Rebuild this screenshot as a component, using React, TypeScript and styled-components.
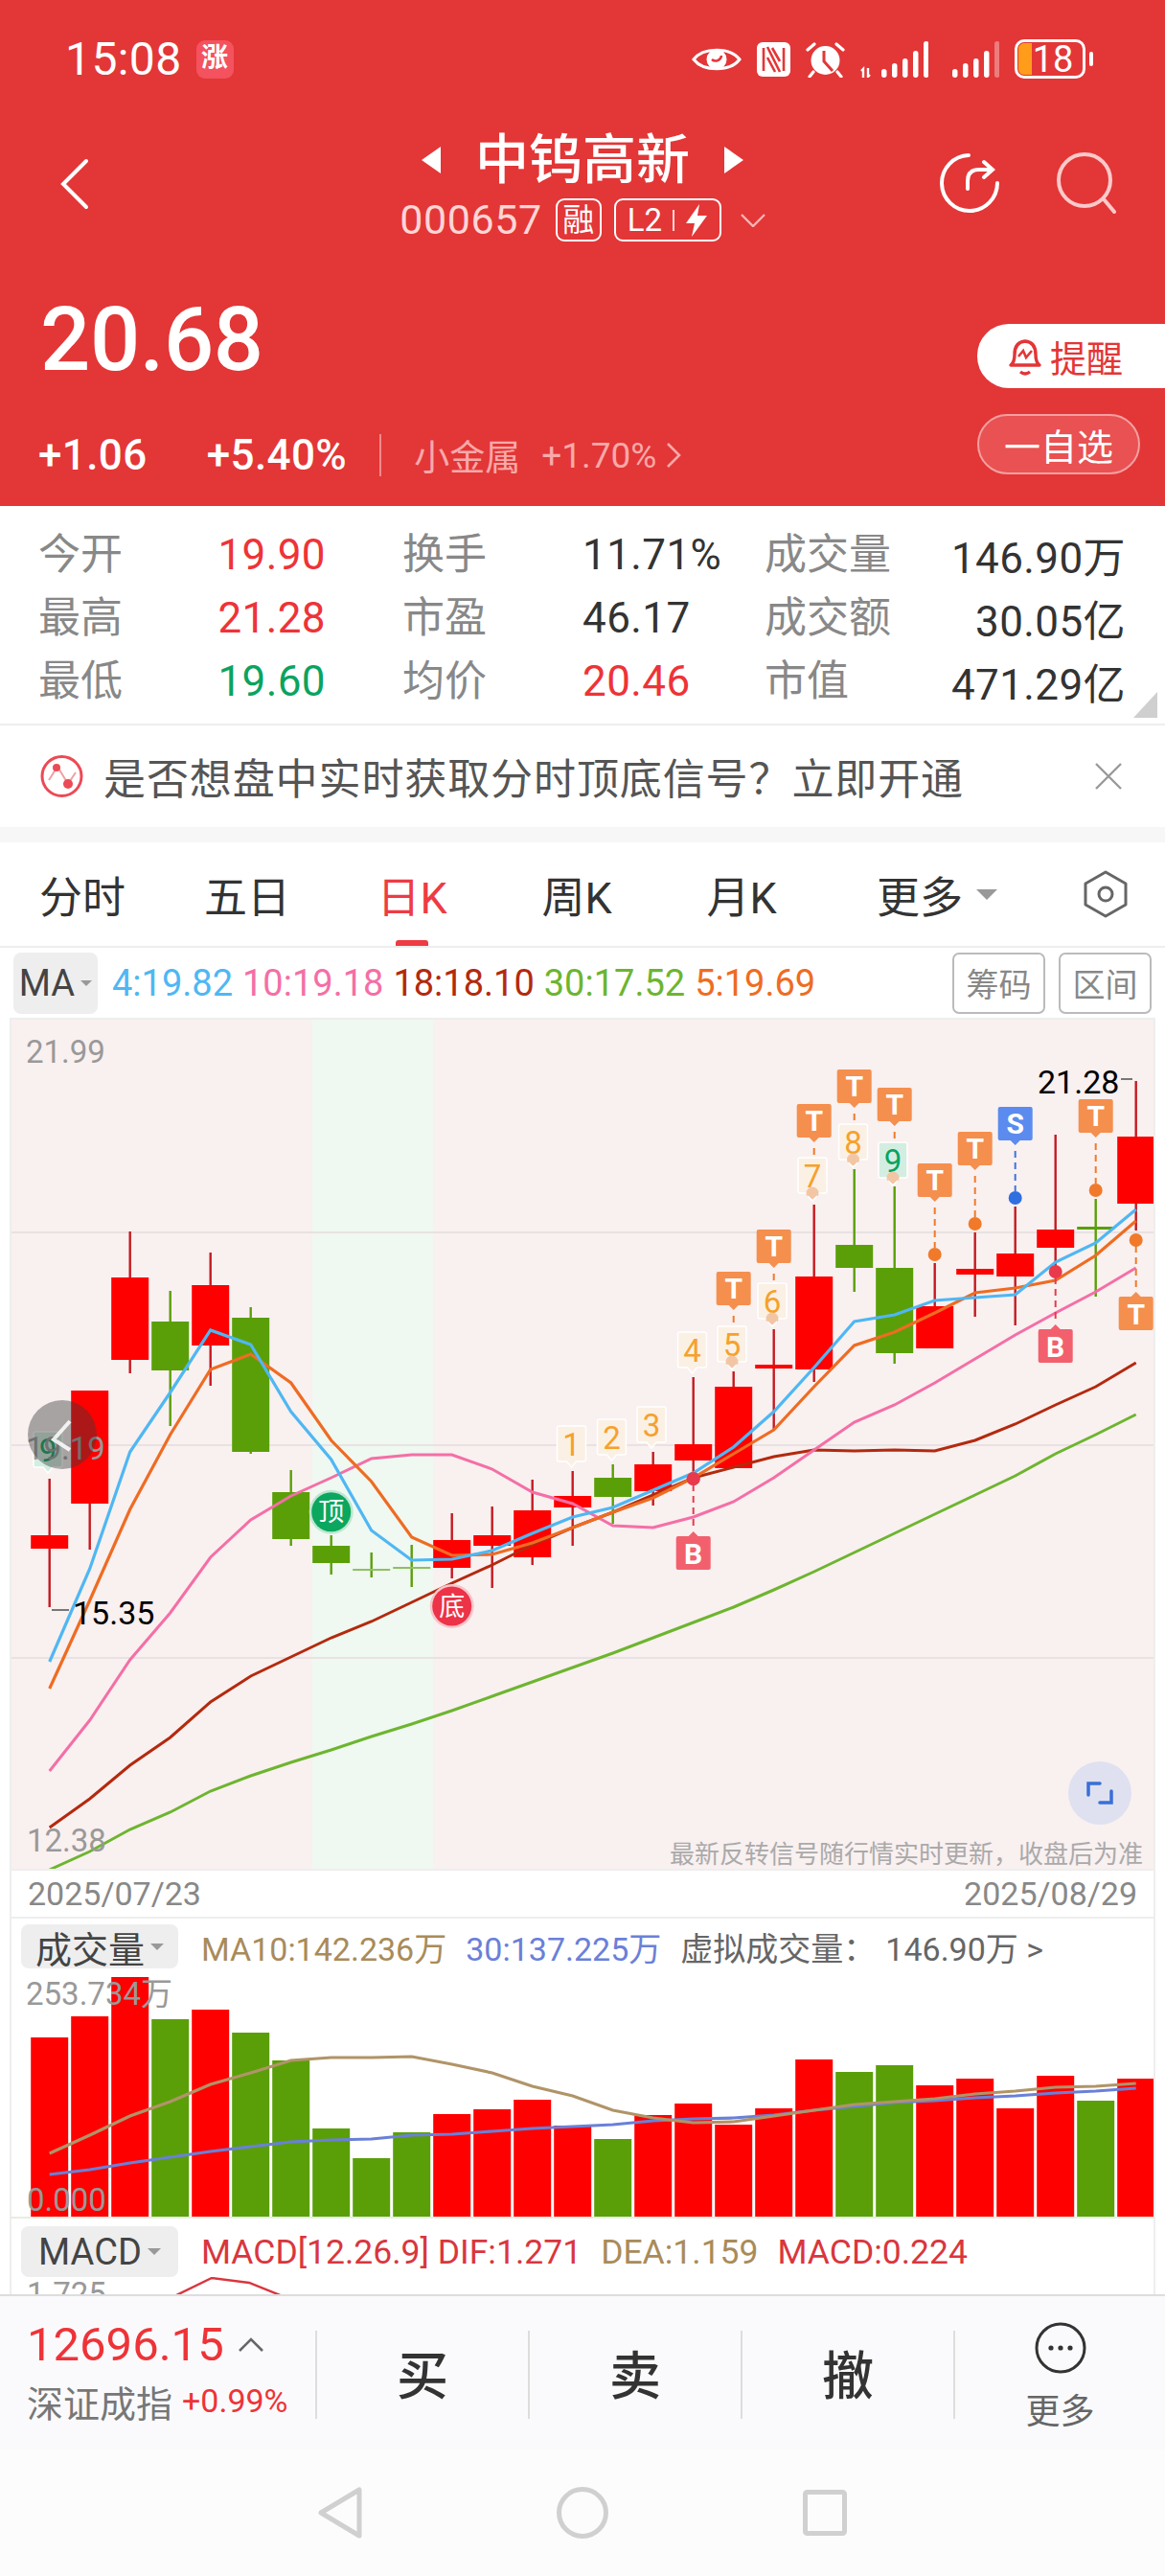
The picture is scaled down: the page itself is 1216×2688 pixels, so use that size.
import * as React from "react";
import styled, { createGlobalStyle } from "styled-components";

const GlobalStyle = createGlobalStyle`
  html, body {
    margin: 0;
    padding: 0;
    background: #fff;
    font-family: Roboto, "Noto Sans CJK SC", sans-serif;
  }
  * {
    box-sizing: border-box;
  }
`;

const RED = "#e33637";
const UP = "#ee3338";
const DOWN = "#0ba360";

const Page = styled.div`
  width: 1216px;
  height: 2688px;
  overflow: hidden;
  display: flex;
  flex-direction: column;
  background: #fff;
`;

/* ---------- red header ---------- */

const Header = styled.header`
  height: 528px;
  flex: none;
  background: ${RED};
  color: #fff;
  padding-top: 41px;
`;

const StatusBar = styled.div`
  height: 41px;
  padding: 0 83px 0 68px;
  display: flex;
  align-items: center;
  justify-content: space-between;
`;

const StatusLeft = styled.div`
  display: flex;
  align-items: center;
  gap: 15px;
`;

const Clock = styled.span`
  font-size: 48px;
  line-height: 41px;
  letter-spacing: 0.4px;
`;

const AppBadge = styled.span`
  width: 39px;
  height: 40px;
  border-radius: 9px;
  background: #f4525e;
  color: #fff;
  font-size: 28px;
  font-weight: 700;
  line-height: 38px;
  text-align: center;
`;

const StatusIcons = styled.div`
  display: flex;
  align-items: center;
  gap: 16px;
`;

const Battery = styled.div`
  position: relative;
  width: 74px;
  height: 41px;
  border: 3px solid #fff;
  border-radius: 10px;
  overflow: visible;
  display: flex;
  align-items: center;
  justify-content: center;
  padding-left: 6px;
  font-size: 38px;
  line-height: 1;

  &::before {
    content: "";
    position: absolute;
    left: 1px;
    top: 1px;
    bottom: 1px;
    width: 14px;
    border-radius: 6px 0 0 6px;
    background: #ff9c1a;
  }

  &::after {
    content: "";
    position: absolute;
    right: -11px;
    top: 10px;
    width: 4px;
    height: 15px;
    border-radius: 2px;
    background: #fff;
  }
`;

const BatteryValue = styled.span`
  position: relative;
`;

const NavRow = styled.div`
  margin-top: 55px;
  height: 115px;
  padding: 0 51px;
  display: grid;
  grid-template-columns: 1fr auto 1fr;
  align-items: center;
`;

const RightIcons = styled.div`
  justify-self: end;
  display: flex;
  gap: 60px;
  align-items: center;
  margin-bottom: 8px;
`;

const BackIcon = styled.svg`
  margin: 0 0 6px 12px;
`;

const TitleBlock = styled.div`
  display: flex;
  flex-direction: column;
  align-items: center;
  gap: 10px;
`;

const TitleRow = styled.div`
  height: 60px;
  display: flex;
  align-items: center;
  gap: 35px;
`;

const StockName = styled.h1`
  margin: 0;
  font-size: 56px;
  line-height: 60px;
  font-weight: 500;
`;

const CodeRow = styled.div`
  height: 45px;
  display: flex;
  align-items: center;
`;

const StockCode = styled.span`
  font-size: 43px;
  line-height: 45px;
  letter-spacing: 0.6px;
  color: #ffd5d5;
  margin-right: 14px;
`;

const OutlineBadge = styled.span`
  height: 45px;
  border: 2px solid #fff;
  border-radius: 9px;
  display: inline-flex;
  align-items: center;
  justify-content: center;
  color: #fff;
  line-height: 1;
`;

const RongBadge = styled(OutlineBadge)`
  width: 48px;
  font-size: 33px;
  margin-right: 13px;
`;

const LevelBadge = styled(OutlineBadge)`
  width: 112px;
  font-size: 33px;
  gap: 11px;
  margin-right: 20px;
`;

const LevelDivider = styled.i`
  width: 2px;
  height: 22px;
  background: #ffd5d5;
`;

const QuoteRow = styled.div`
  display: flex;
  justify-content: space-between;
  padding-top: 60px;
`;

const QuoteLeft = styled.div`
  padding-left: 40px;
`;

const Price = styled.div`
  font-size: 92px;
  line-height: 86px;
  font-weight: 500;
  letter-spacing: -0.4px;
  margin-left: 2px;
`;

const ChangeRow = styled.div`
  margin-top: 55px;
  height: 44px;
  display: flex;
  align-items: center;
`;

const ChangeValue = styled.span`
  font-size: 44px;
  font-weight: 500;
  letter-spacing: 0.4px;
  margin-right: 62px;
  line-height: 44px;
  &:nth-child(2) {
    margin-right: 34px;
  }
`;

const ChangeDivider = styled.i`
  width: 2px;
  height: 44px;
  background: #f08a8a;
  margin-right: 34px;
`;

const SectorName = styled.span`
  font-size: 37px;
  color: #f7a9a9;
  margin-right: 22px;
`;

const SectorChange = styled.span`
  font-size: 37px;
  color: #f7a9a9;
  margin-right: 10px;
`;

const QuoteActions = styled.div`
  padding-top: 26px;
  width: 196px;
  display: flex;
  flex-direction: column;
  gap: 27px;
`;

const RemindButton = styled.div`
  height: 67px;
  background: #fff;
  border-radius: 33px 0 0 33px;
  color: ${RED};
  font-size: 38px;
  display: flex;
  align-items: center;
  gap: 8px;
  padding-left: 32px;
`;

const WatchButton = styled.div`
  width: 170px;
  height: 63px;
  border: 2px solid #f3a0a0;
  border-radius: 32px;
  background: #e95152;
  font-size: 38px;
  display: flex;
  align-items: center;
  justify-content: center;
`;

/* ---------- stats ---------- */

const StatsGrid = styled.section`
  position: relative;
  height: 229px;
  flex: none;
  padding: 15px 41px 0 40px;
  display: grid;
  grid-template-columns: 150px 150px 268px 190px 180px 197px;
  grid-auto-rows: 66px;
  align-items: center;
  border-bottom: 2px solid #eeeeee;

  &::after {
    content: "";
    position: absolute;
    right: 8px;
    bottom: 6px;
    border-style: solid;
    border-width: 0 0 27px 25px;
    border-color: transparent transparent #cfcfcf transparent;
  }
`;

const StatLabel = styled.span<{ $inset?: boolean }>`
  font-size: 44px;
  color: #888;
  white-space: nowrap;
  padding-left: ${(p) => (p.$inset ? "80px" : "0")};
  padding-bottom: 3px;
`;

const StatValue = styled.span<{ $color?: string; $right?: boolean }>`
  font-size: 44px;
  letter-spacing: 0.4px;
  color: ${(p) => p.$color || "#333"};
  text-align: ${(p) => (p.$right ? "right" : "left")};
  padding-top: 5px;
  white-space: nowrap;
`;

const Banner = styled.div`
  height: 106px;
  flex: none;
  display: flex;
  align-items: center;
  padding: 0 44px 0 42px;
  gap: 21px;
`;

const BannerText = styled.span`
  flex: 1;
  font-size: 44px;
  color: #555;
  white-space: nowrap;
  letter-spacing: 0.9px;
`;

const GapBand = styled.div`
  height: 16px;
  flex: none;
  background: #f7f7f7;
`;

/* ---------- tabs ---------- */

const Tabs = styled.nav`
  height: 110px;
  flex: none;
  display: grid;
  grid-template-columns: repeat(6, 172px) 1fr;
  align-items: center;
  border-bottom: 2px solid #eeeeee;
`;

const Tab = styled.div<{ $active?: boolean }>`
  position: relative;
  height: 108px;
  display: flex;
  align-items: center;
  justify-content: center;
  gap: 14px;
  font-size: 45px;
  white-space: nowrap;
  color: ${(p) => (p.$active ? "#ee3b44" : "#333")};

  &::after {
    content: "";
    display: ${(p) => (p.$active ? "block" : "none")};
    position: absolute;
    bottom: 0;
    left: 50%;
    width: 34px;
    height: 6px;
    margin-left: -17px;
    border-radius: 3px 3px 0 0;
    background: #ee3b44;
  }
`;

const MoreTab = styled(Tab)`
  justify-content: flex-start;
  padding-left: 55px;
`;

const Caret = styled.i<{ $size?: number }>`
  width: 0;
  height: 0;
  border-style: solid;
  border-width: ${(p) => p.$size || 11}px ${(p) => p.$size || 11}px 0;
  border-color: #999 transparent transparent;
`;

const TabTool = styled.div`
  display: flex;
  justify-content: flex-end;
  padding-right: 38px;
`;

/* ---------- MA row ---------- */

const MaRow = styled.div`
  height: 73px;
  flex: none;
  display: flex;
  align-items: center;
  padding: 0 14px;
`;

const PickButton = styled.div<{ $w?: number; $h?: number }>`
  width: ${(p) => p.$w || 88}px;
  height: ${(p) => p.$h || 64}px;
  border-radius: 8px;
  background: #eeeeee;
  color: #444;
  font-size: 38px;
  display: flex;
  align-items: center;
  justify-content: center;
  gap: 6px;
  flex: none;
`;

const MaValues = styled.div`
  display: flex;
  gap: 10px;
  margin-left: 15px;
`;

const MaValue = styled.span<{ $color: string }>`
  font-size: 38px;
  color: ${(p) => p.$color};
  white-space: nowrap;
`;

const MaTools = styled.div`
  margin-left: auto;
  display: flex;
  gap: 14px;
`;

const MaTool = styled.div`
  width: 97px;
  height: 64px;
  border: 2px solid #bbb;
  border-radius: 7px;
  color: #888;
  font-size: 34px;
  display: flex;
  align-items: center;
  justify-content: center;
`;

/* ---------- charts ---------- */

const ChartFrame = styled.div`
  flex: none;
  margin: 0 10px;
  border-left: 2px solid #eeeeee;
  border-right: 2px solid #eeeeee;
`;

const KlineBox = styled(ChartFrame)`
  height: 890px;
  border-top: 2px solid #eeeeee;
  border-bottom: 2px solid #eeeeee;
  line-height: 0;
`;

const ChartSvg = styled.svg`
  display: block;
  font-family: Roboto, "Noto Sans CJK SC", sans-serif;
`;

const AxisText = styled.text`
  font-size: 33px;
  fill: #999;
`;

const ExtremeText = styled.text`
  font-size: 34px;
  fill: #000;
`;

const HintText = styled.text`
  font-size: 26px;
  fill: #aaa;
`;

const NumText = styled.text<{ $color: string }>`
  font-size: 33px;
  fill: ${(p) => p.$color};
  text-anchor: middle;
`;

const FlagText = styled.text`
  font-size: 30px;
  font-weight: 700;
  fill: #fff;
  text-anchor: middle;
`;

const CircleText = styled.text`
  font-size: 27px;
  fill: #fff;
  text-anchor: middle;
`;

const DateRow = styled(ChartFrame)`
  height: 50px;
  border-bottom: 2px solid #eeeeee;
  padding: 0 17px;
  display: flex;
  align-items: center;
  justify-content: space-between;
  font-size: 34px;
  color: #888;
`;

const IndicatorHead = styled(ChartFrame)<{ $size?: number }>`
  height: 52px;
  flex: none;
  padding: 6px 0 0 10px;
  display: flex;
  align-items: center;
  font-size: ${(p) => p.$size || 34}px;
  white-space: nowrap;
`;

const MacdHead = styled(IndicatorHead)`
  height: 61px;
  padding-top: 8px;
`;

const HeadText = styled.span<{ $color: string; $gap?: number }>`
  color: ${(p) => p.$color};
  margin-left: ${(p) => p.$gap ?? 20}px;
`;

const HeadAmount = styled.span`
  margin-left: 10px;
`;

const VolumeBox = styled(ChartFrame)`
  height: 261px;
  border-bottom: 2px solid #e6eee0;
`;

const MacdBox = styled(ChartFrame)`
  height: 18px;
  overflow: hidden;
`;

/* ---------- footer ---------- */

const TradeBar = styled.footer`
  height: 164px;
  flex: none;
  background: #fafafc;
  border-top: 2px solid #dddddd;
  display: grid;
  grid-template-columns: 331px 222px 222px 222px 1fr;
`;

const TradeCell = styled.div`
  margin-top: 36px;
  height: 92px;
  border-right: 2px solid #dddddd;
  display: flex;
  align-items: center;
  justify-content: center;
  font-size: 54px;
  font-weight: 500;
  color: #333;
  padding-bottom: 6px;

  &:last-child {
    border-right: 0;
  }
`;

const IndexCell = styled(TradeCell)`
  flex-direction: column;
  align-items: flex-start;
  justify-content: flex-start;
  padding: 0 0 0 28px;
`;

const IndexTop = styled.div`
  display: flex;
  align-items: center;
  gap: 14px;
  height: 46px;
  margin-top: -8px;
`;

const IndexValue = styled.span`
  font-size: 49px;
  line-height: 46px;
  font-weight: 400;
  color: ${UP};
`;

const IndexBottom = styled.div`
  display: flex;
  align-items: center;
  gap: 10px;
  margin-top: 13px;
  height: 44px;
`;

const IndexName = styled.span`
  font-size: 38px;
  font-weight: 400;
  color: #777;
`;

const IndexChange = styled.span`
  font-size: 34px;
  font-weight: 400;
  color: ${UP};
`;

const MoreCell = styled.div`
  display: flex;
  flex-direction: column;
  align-items: center;
  padding-top: 27px;
  gap: 20px;
  font-size: 36px;
  color: #666;
  line-height: 40px;
`;

const NavBar = styled.div`
  flex: 1;
  background: #fcfcfc;
  display: flex;
  align-items: center;
  justify-content: center;
  gap: 203px;
  margin-top: -2px;
`;

const SecondSignal = styled.span`
  margin-left: 9px;
  display: flex;
`;

/* ---------- data ---------- */

type Candle = [number, number, number, number, "r" | "g"];

// wick top, body top, body bottom, wick bottom (page px)
const candles: Candle[] = [
  [1543, 1602, 1616, 1677, "r"],
  [1451, 1451, 1569, 1617, "r"],
  [1285, 1333, 1419, 1433, "r"],
  [1347, 1379, 1430, 1488, "g"],
  [1307, 1341, 1404, 1446, "r"],
  [1364, 1375, 1515, 1517, "g"],
  [1534, 1557, 1606, 1613, "g"],
  [1602, 1613, 1631, 1643, "g"],
  [1620, 1637, 1639, 1646, "g"],
  [1612, 1635, 1637, 1656, "g"],
  [1579, 1607, 1636, 1647, "r"],
  [1572, 1602, 1613, 1657, "r"],
  [1544, 1576, 1625, 1633, "r"],
  [1535, 1561, 1573, 1613, "r"],
  [1528, 1542, 1562, 1590, "g"],
  [1515, 1528, 1556, 1571, "r"],
  [1437, 1507, 1524, 1543, "r"],
  [1431, 1447, 1532, 1532, "r"],
  [1387, 1424, 1428, 1492, "r"],
  [1257, 1332, 1429, 1442, "r"],
  [1220, 1299, 1323, 1348, "g"],
  [1238, 1323, 1412, 1423, "g"],
  [1318, 1363, 1407, 1407, "r"],
  [1286, 1324, 1330, 1374, "r"],
  [1259, 1308, 1332, 1383, "r"],
  [1184, 1283, 1302, 1327, "r"],
  [1251, 1280, 1283, 1353, "g"],
  [1128, 1186, 1256, 1284, "r"],
];

const ma4 = [1734, 1637, 1515, 1453, 1388, 1403, 1473, 1523, 1597, 1628, 1627, 1618, 1600, 1583, 1573, 1555, 1537, 1510, 1473, 1427, 1379, 1372, 1357, 1354, 1351, 1317, 1297, 1262];
const ma5 = [1762, 1670, 1575, 1497, 1429, 1413, 1443, 1503, 1546, 1604, 1623, 1622, 1610, 1594, 1578, 1563, 1542, 1517, 1492, 1447, 1404, 1390, 1370, 1349, 1344, 1336, 1310, 1274];
const ma10 = [1848, 1795, 1732, 1683, 1625, 1586, 1561, 1542, 1522, 1518, 1518, 1533, 1557, 1569, 1592, 1594, 1583, 1567, 1542, 1513, 1484, 1466, 1443, 1418, 1393, 1370, 1348, 1323];
const ma18 = [1907, 1877, 1842, 1813, 1776, 1749, 1729, 1709, 1692, 1672, 1652, 1633, 1612, 1594, 1578, 1560, 1542, 1531, 1520, 1513, 1514, 1513, 1514, 1503, 1486, 1466, 1447, 1422];
const ma30 = [1951, 1932, 1909, 1891, 1869, 1853, 1839, 1826, 1812, 1799, 1785, 1770, 1755, 1740, 1725, 1709, 1693, 1677, 1659, 1640, 1620, 1600, 1580, 1560, 1540, 1517, 1497, 1476];

const volumes: [number, "r" | "g"][] = [
  [2126, "r"], [2104, "r"], [2063, "r"], [2107, "g"], [2097, "r"], [2121, "g"], [2150, "g"],
  [2221, "g"], [2252, "g"], [2225, "g"], [2206, "r"], [2201, "r"], [2191, "r"], [2218, "r"],
  [2232, "g"], [2207, "r"], [2195, "r"], [2217, "r"], [2200, "r"], [2149, "r"], [2162, "g"],
  [2155, "g"], [2176, "r"], [2169, "r"], [2200, "r"], [2166, "r"], [2192, "g"], [2169, "r"],
];

const volMa10 = [2247, 2228, 2208, 2193, 2175, 2163, 2150, 2147, 2147, 2146, 2154, 2163, 2177, 2187, 2202, 2210, 2215, 2214, 2208, 2202, 2196, 2193, 2190, 2185, 2182, 2178, 2177, 2174];
const volMa30 = [2269, 2264, 2257, 2251, 2245, 2240, 2235, 2233, 2232, 2228, 2227, 2224, 2221, 2219, 2217, 2213, 2211, 2210, 2207, 2202, 2198, 2194, 2192, 2189, 2187, 2184, 2182, 2179];

const cx = (i: number) => 51.7 + 42 * i;
const points = (ys: number[]) => ys.map((y, i) => `${cx(i)},${y}`).join(" ");

const numTags: [string, number, number, boolean, boolean][] = [
  ["1", 596.5, 1488, false, false],
  ["2", 638.5, 1481, false, false],
  ["3", 680, 1468, false, false],
  ["4", 722.5, 1390, false, false],
  ["5", 764, 1384, true, false],
  ["6", 806, 1339, true, false],
  ["7", 848, 1208, true, false],
  ["8", 890.5, 1173, true, false],
  ["9", 932, 1192, true, true],
];

// candle index, label, top of flag, dot y (or 0), dash end, colour
const topFlags: [number, string, number, number, number, string][] = [
  [17, "T", 1327, 0, 1383, "#f58f4e"],
  [18, "T", 1283, 0, 1339, "#f58f4e"],
  [19, "T", 1152, 0, 1208, "#f58f4e"],
  [20, "T", 1116, 0, 1173, "#f58f4e"],
  [21, "T", 1135, 0, 1192, "#f58f4e"],
  [22, "T", 1214, 1309, 1302, "#f58f4e"],
  [23, "T", 1181, 1277, 1270, "#f58f4e"],
  [24, "S", 1155, 1250, 1243, "#5b8bee"],
  [26, "T", 1147, 1242, 1235, "#f58f4e"],
];

const bottomFlags: [number, string, number, number, string, string][] = [
  [16, "B", 1603, 1543, "#f2606e", "#e83a4c"],
  [25, "B", 1387, 1327, "#f2606e", "#e83a4c"],
  [27, "T", 1353, 1294, "#f58f4e", "#f07a2a"],
];

/* ---------- drawings ---------- */

function TopFlag({ x, y, label, fill }: { x: number; y: number; label: string; fill: string }) {
  return (
    <g>
      <path
        d={`M${x - 18} ${y + 2} q0 -2 2 -2 h32 q2 0 2 2 v31 q0 2 -2 2 h-11 l-5 5 l-5 -5 h-11 q-2 0 -2 -2 z`}
        fill={fill}
      />
      <FlagText x={x} y={y + 28}>{label}</FlagText>
    </g>
  );
}

function BottomFlag({ x, y, label, fill }: { x: number; y: number; label: string; fill: string }) {
  return (
    <g>
      <path
        d={`M${x - 18} ${y + 2} q0 -2 2 -2 h11 l5 -5 l5 5 h11 q2 0 2 2 v31 q0 2 -2 2 h-32 q-2 0 -2 -2 z`}
        fill={fill}
      />
      <FlagText x={x} y={y + 29}>{label}</FlagText>
    </g>
  );
}

function NumTag({ text, x, y, dot, green }: { text: string; x: number; y: number; dot: boolean; green: boolean }) {
  return (
    <g>
      <path
        d={`M${x - 15} ${y + 2} q0 -2 2 -2 h26 q2 0 2 2 v33 q0 2 -2 2 h-8 l-5 6 l-5 -6 h-8 q-2 0 -2 -2 z`}
        fill={green ? "#d3eee1" : "#fbf0e4"}
        stroke="#fff"
        strokeWidth={1.5}
      />
      <NumText x={x} y={y + 31} $color={green ? DOWN : "#f5a12c"}>{text}</NumText>
      {dot && (
        <g>
          <circle cx={x} cy={y + 37} r={6.5} fill="#f2c6a5" />
          <path d={`M${x - 5} ${y + 40} l5 5 l5 -5`} fill="none" stroke="#fff" strokeWidth={1.6} />
        </g>
      )}
    </g>
  );
}

function KlineChart() {
  return (
    <ChartSvg width={1192} height={886} viewBox="12 1064 1192 886">
      <rect x={12} y={1064} width={1192} height={886} fill="#f9f0f0" />
      <rect x={326} y={1064} width={126} height={886} fill="#eff8f1" />
      {[1286, 1508, 1730].map((y) => (
        <line key={y} x1={12} x2={1204} y1={y} y2={y} stroke="#e9e2e2" strokeWidth={2} />
      ))}

      {candles.map(([hi, top, bottom, lo, c], i) => {
        const doji = bottom - top < 4 && c === "g";
        const wick = c === "r" ? "#c51a20" : "#5a9f08";
        return (
          <g key={i}>
            <line x1={cx(i)} x2={cx(i)} y1={hi} y2={lo} stroke={wick} strokeWidth={2.4} />
            <rect
              x={cx(i) - 19.5}
              y={top}
              width={39}
              height={bottom - top}
              fill={c === "r" ? "#ff0000" : doji && i < 10 ? "#8fc062" : "#5a9f08"}
            />
          </g>
        );
      })}

      <circle cx={cx(16)} cy={1543} r={7} fill="#e83a4c" />
      <polyline points={points(ma30)} fill="none" stroke="#6db52f" strokeWidth={3} />
      <polyline points={points(ma18)} fill="none" stroke="#b32a0e" strokeWidth={3} />
      <polyline points={points(ma10)} fill="none" stroke="#f46fa6" strokeWidth={3} />
      <polyline points={points(ma5)} fill="none" stroke="#ee6c23" strokeWidth={3.2} />
      <polyline points={points(ma4)} fill="none" stroke="#4fb7f3" strokeWidth={3.2} />

      {/* dashes between flag and candle */}
      {topFlags.map(([i, , top, dot, end, color]) => (
        <g key={i}>
          <line
            x1={cx(i)}
            x2={cx(i)}
            y1={top + 46}
            y2={end}
            stroke={color === "#5b8bee" ? "#3b74e0" : "#f07a2a"}
            strokeWidth={2}
            strokeDasharray="7 5"
          />
          {dot > 0 && <circle cx={cx(i)} cy={dot} r={7} fill={color === "#5b8bee" ? "#2f6fe0" : "#f07a2a"} />}
        </g>
      ))}
      {bottomFlags.map(([i, , top, dot, , line]) => (
        <g key={i}>
          <line x1={cx(i)} x2={cx(i)} y1={dot + 6} y2={top - 6} stroke={line} strokeWidth={2} strokeDasharray="7 5" />
          <circle cx={cx(i)} cy={dot} r={7} fill={line} />
        </g>
      ))}

      {numTags.map(([t, x, y, dot, green]) => (
        <NumTag key={t} text={t} x={x} y={y} dot={dot} green={green} />
      ))}
      <NumTag text="9" x={50} y={1494} dot={false} green />

      {topFlags.map(([i, label, top, , , color]) => (
        <TopFlag key={i} x={cx(i)} y={top} label={label} fill={color} />
      ))}
      {bottomFlags.map(([i, label, top, , fill]) => (
        <BottomFlag key={i} x={cx(i)} y={top} label={label} fill={fill} />
      ))}

      <circle cx={345.7} cy={1577.7} r={23} fill="#bfe6d2" />
      <circle cx={345.7} cy={1577.7} r={20.5} fill="#0ca75e" />
      <CircleText x={345.7} y={1587}>顶</CircleText>
      <circle cx={471.7} cy={1676} r={23} fill="#f7c5ca" />
      <circle cx={471.7} cy={1676} r={20.5} fill="#ec3348" />
      <CircleText x={471.7} y={1685.5}>底</CircleText>

      <AxisText x={27} y={1109}>21.99</AxisText>
      <AxisText x={27} y={1523}>19.19</AxisText>
      <AxisText x={28} y={1932}>12.38</AxisText>

      <ExtremeText x={1083} y={1141}>21.28</ExtremeText>
      <line x1={1170} x2={1182} y1={1126} y2={1126} stroke="#777" strokeWidth={2} />
      <line x1={54} x2={72} y1={1680} y2={1680} stroke="#777" strokeWidth={2} />
      <ExtremeText x={76} y={1695}>15.35</ExtremeText>

      <HintText x={699} y={1944}>最新反转信号随行情实时更新，收盘后为准</HintText>

      <circle cx={65} cy={1497} r={36} fill="#3a3a3a" fillOpacity={0.42} />
      <path d="M73 1483 L56 1502 L73 1513" fill="none" stroke="#fff" strokeOpacity={0.85} strokeWidth={4} />

      <circle cx={1148} cy={1871} r={33} fill="#dfe1f0" />
      <path
        d="M1136 1873 v-12 h12 M1160 1869 v12 h-12"
        fill="none"
        stroke="#3a6fd8"
        strokeWidth={3.5}
        strokeLinecap="round"
      />
    </ChartSvg>
  );
}

function VolumeChart() {
  return (
    <ChartSvg width={1192} height={259} viewBox="12 2054 1192 259">
      {volumes.map(([top, c], i) => (
        <rect key={i} x={cx(i) - 19.5} y={top} width={39} height={2313 - top} fill={c === "r" ? "#ff0000" : "#5a9f08"} />
      ))}
      <polyline points={points(volMa30)} fill="none" stroke="#6a80d8" strokeWidth={3.2} />
      <polyline points={points(volMa10)} fill="none" stroke="#b09468" strokeWidth={3.2} />
      <AxisText x={27} y={2092}>253.734万</AxisText>
      <AxisText x={28} y={2307}>0.000</AxisText>
    </ChartSvg>
  );
}

function MacdChart() {
  return (
    <ChartSvg width={1192} height={18} viewBox="12 2376 1192 18">
      <polyline points="182,2396 221,2377 260,2382 295,2396" fill="none" stroke="#d9363e" strokeWidth={2.4} />
      <AxisText x={28} y={2405}>1.725</AxisText>
    </ChartSvg>
  );
}

function EyeIcon() {
  return (
    <svg width={52} height={24} viewBox="0 0 52 24">
      <path d="M2 12 C12 -1 40 -1 50 12 C40 25 12 25 2 12 Z" fill="none" stroke="#fff" strokeWidth={3} />
      <circle cx={26} cy={12} r={10.5} fill="#fff" />
      <path d="M21 12 a6 6 0 0 0 10 -4" fill="none" stroke={RED} strokeWidth={2.5} />
    </svg>
  );
}

function NfcIcon() {
  return (
    <svg width={35} height={36} viewBox="0 0 35 36">
      <rect width={35} height={36} rx={6} fill="#fff" />
      <path d="M7 6 V30 M28 6 V30 M11 5 L24 31 M16 6 L24 20 M11 16 L19 31" fill="none" stroke={RED} strokeWidth={2.6} />
    </svg>
  );
}

function AlarmIcon() {
  return (
    <svg width={41} height={38} viewBox="0 0 41 38">
      <circle cx={20.5} cy={20} r={15} fill="#fff" />
      <path d="M19 10 V21 L28 31" fill="none" stroke={RED} strokeWidth={3} />
      <path d="M2 9 L9 3 M39 9 L32 3 M8 32 L4 37 M33 32 L37 37" stroke="#fff" strokeWidth={3.2} strokeLinecap="round" />
    </svg>
  );
}

function SignalIcon({ arrows, faded }: { arrows?: boolean; faded?: boolean }) {
  const heights = [9, 15, 20, 28, 38];
  const left = arrows ? 22 : 0;
  return (
    <svg width={left + 49} height={38} viewBox={`0 0 ${left + 49} 38`}>
      {arrows && <path d="M3 38 V29 L1 31 M8 28 V37 L10 35" fill="none" stroke="#fff" strokeWidth={2.4} />}
      {heights.map((h, i) => (
        <rect
          key={i}
          x={left + i * 11}
          y={38 - h}
          width={5.5}
          height={h}
          rx={2.75}
          fill="#fff"
          fillOpacity={faded && i === 4 ? 0.35 : 1}
        />
      ))}
    </svg>
  );
}

function ArrowLeft() {
  return (
    <svg width={22} height={28} viewBox="0 0 22 28">
      <path d="M21 0 V28 L1 14 Z" fill="#fff" />
    </svg>
  );
}

function ArrowRight() {
  return (
    <svg width={22} height={28} viewBox="0 0 22 28">
      <path d="M1 0 V28 L21 14 Z" fill="#fff" />
    </svg>
  );
}

function App() {
  return (
    <Page>
      <GlobalStyle />
      <Header>
        <StatusBar>
          <StatusLeft>
            <Clock>15:08</Clock>
            <AppBadge>涨</AppBadge>
          </StatusLeft>
          <StatusIcons>
            <EyeIcon />
            <NfcIcon />
            <AlarmIcon />
            <SignalIcon arrows />
            <SecondSignal>
              <SignalIcon faded />
            </SecondSignal>
            <Battery>
              <BatteryValue>18</BatteryValue>
            </Battery>
          </StatusIcons>
        </StatusBar>

        <NavRow>
          <BackIcon width={30} height={54} viewBox="0 0 30 54">
            <path d="M27 3 L3 27 L27 51" fill="none" stroke="#fff" strokeWidth={4} strokeLinecap="round" />
          </BackIcon>
          <TitleBlock>
            <TitleRow>
              <ArrowLeft />
              <StockName>中钨高新</StockName>
              <ArrowRight />
            </TitleRow>
            <CodeRow>
              <StockCode>000657</StockCode>
              <RongBadge>融</RongBadge>
              <LevelBadge>
                L2
                <LevelDivider />
                <svg width={24} height={34} viewBox="0 0 24 34">
                  <path d="M15 0 L1 20 H10 L7 34 L23 12 H13 Z" fill="#fff" />
                </svg>
              </LevelBadge>
              <svg width={26} height={14} viewBox="0 0 26 14">
                <path d="M1 1 L13 13 L25 1" fill="none" stroke="#f7b5b5" strokeWidth={2.4} />
              </svg>
            </CodeRow>
          </TitleBlock>
          <RightIcons>
            <svg width={62} height={62} viewBox="0 0 62 62">
              <path
                d="M30 2 A29 29 0 1 0 60 31"
                fill="none"
                stroke="#fff"
                strokeWidth={4}
                strokeLinecap="round"
              />
              <path
                d="M29 37 V29 Q29 17 41 17 H53 M46 9 L55 17 L46 25"
                fill="none"
                stroke="#fff"
                strokeWidth={4}
                strokeLinecap="round"
              />
            </svg>
            <svg width={62} height={64} viewBox="0 0 62 64">
              <circle cx={29} cy={29} r={27} fill="none" stroke="#fbc9c9" strokeWidth={4} />
              <path d="M50 50 L60 62" stroke="#fbc9c9" strokeWidth={4} strokeLinecap="round" />
            </svg>
          </RightIcons>
        </NavRow>

        <QuoteRow>
          <QuoteLeft>
            <Price>20.68</Price>
            <ChangeRow>
              <ChangeValue>+1.06</ChangeValue>
              <ChangeValue>+5.40%</ChangeValue>
              <ChangeDivider />
              <SectorName>小金属</SectorName>
              <SectorChange>+1.70%</SectorChange>
              <svg width={16} height={28} viewBox="0 0 16 28">
                <path d="M2 2 L14 14 L2 26" fill="none" stroke="#f7a9a9" strokeWidth={2.6} />
              </svg>
            </ChangeRow>
          </QuoteLeft>
          <QuoteActions>
            <RemindButton>
              <svg width={36} height={40} viewBox="0 0 36 40">
                <path
                  d="M3 29 Q7 26 7 18 Q7 5 18 4 Q29 5 29 18 Q29 26 33 29 Z"
                  fill="none"
                  stroke={RED}
                  strokeWidth={3.4}
                  strokeLinejoin="round"
                />
                <path d="M13 36 Q18 40 23 36" fill="none" stroke={RED} strokeWidth={3.4} />
                <path d="M11 20 L16 14 L19 21 L25 14" fill="none" stroke={RED} strokeWidth={2.6} />
              </svg>
              提醒
            </RemindButton>
            <WatchButton>一自选</WatchButton>
          </QuoteActions>
        </QuoteRow>
      </Header>

      <StatsGrid>
        <StatLabel>今开</StatLabel>
        <StatValue $color={UP} $right>19.90</StatValue>
        <StatLabel $inset>换手</StatLabel>
        <StatValue>11.71%</StatValue>
        <StatLabel>成交量</StatLabel>
        <StatValue $right>146.90万</StatValue>

        <StatLabel>最高</StatLabel>
        <StatValue $color={UP} $right>21.28</StatValue>
        <StatLabel $inset>市盈</StatLabel>
        <StatValue>46.17</StatValue>
        <StatLabel>成交额</StatLabel>
        <StatValue $right>30.05亿</StatValue>

        <StatLabel>最低</StatLabel>
        <StatValue $color={DOWN} $right>19.60</StatValue>
        <StatLabel $inset>均价</StatLabel>
        <StatValue $color={UP}>20.46</StatValue>
        <StatLabel>市值</StatLabel>
        <StatValue $right>471.29亿</StatValue>
      </StatsGrid>

      <Banner>
        <svg width={45} height={46} viewBox="0 0 45 46">
          <circle cx={22.5} cy={23} r={20.5} fill="none" stroke="#ec4a55" strokeWidth={3} />
          <path d="M9 27 L18 13 L29 31 L37 19" fill="none" stroke="#f0a0a5" strokeWidth={2} />
          <circle cx={17} cy={14} r={4} fill="#ec4a55" />
          <circle cx={29} cy={31} r={5} fill="#ec4a55" />
        </svg>
        <BannerText>是否想盘中实时获取分时顶底信号？立即开通</BannerText>
        <svg width={30} height={30} viewBox="0 0 30 30">
          <path d="M2 2 L28 28 M28 2 L2 28" stroke="#999" strokeWidth={2.4} />
        </svg>
      </Banner>

      <GapBand />

      <Tabs>
        <Tab>分时</Tab>
        <Tab>五日</Tab>
        <Tab $active>日K</Tab>
        <Tab>周K</Tab>
        <Tab>月K</Tab>
        <MoreTab>
          更多
          <Caret />
        </MoreTab>
        <TabTool>
          <svg width={48} height={50} viewBox="0 0 48 50">
            <path d="M24 2 L45 14 V36 L24 48 L3 36 V14 Z" fill="none" stroke="#666" strokeWidth={3} strokeLinejoin="round" />
            <circle cx={24} cy={25} r={7} fill="none" stroke="#666" strokeWidth={3} />
          </svg>
        </TabTool>
      </Tabs>

      <MaRow>
        <PickButton>
          MA
          <Caret $size={6} />
        </PickButton>
        <MaValues>
          <MaValue $color="#4fb7f3">4:19.82</MaValue>
          <MaValue $color="#f46fa6">10:19.18</MaValue>
          <MaValue $color="#b32a0e">18:18.10</MaValue>
          <MaValue $color="#6db52f">30:17.52</MaValue>
          <MaValue $color="#ee6c23">5:19.69</MaValue>
        </MaValues>
        <MaTools>
          <MaTool>筹码</MaTool>
          <MaTool>区间</MaTool>
        </MaTools>
      </MaRow>

      <KlineBox>
        <KlineChart />
      </KlineBox>

      <DateRow>
        <span>2025/07/23</span>
        <span>2025/08/29</span>
      </DateRow>

      <IndicatorHead>
        <PickButton $w={164} $h={46}>
          成交量
          <Caret $size={7} />
        </PickButton>
        <HeadText $color="#a98b5a" $gap={24}>MA10:142.236万</HeadText>
        <HeadText $color="#6a80d8">30:137.225万</HeadText>
        <HeadText $color="#666">
          虚拟成交量：<HeadAmount>146.90万 &gt;</HeadAmount>
        </HeadText>
      </IndicatorHead>

      <VolumeBox>
        <VolumeChart />
      </VolumeBox>

      <MacdHead $size={35.5}>
        <PickButton $w={164} $h={53}>
          MACD
          <Caret $size={7} />
        </PickButton>
        <HeadText $color="#d9363e" $gap={24}>MACD[12.26.9] DIF:1.271</HeadText>
        <HeadText $color="#a98b5a">DEA:1.159</HeadText>
        <HeadText $color="#d9363e">MACD:0.224</HeadText>
      </MacdHead>

      <MacdBox>
        <MacdChart />
      </MacdBox>

      <TradeBar>
        <IndexCell>
          <IndexTop>
            <IndexValue>12696.15</IndexValue>
            <svg width={28} height={16} viewBox="0 0 28 16">
              <path d="M2 14 L14 2 L26 14" fill="none" stroke="#666" strokeWidth={2.6} />
            </svg>
          </IndexTop>
          <IndexBottom>
            <IndexName>深证成指</IndexName>
            <IndexChange>+0.99%</IndexChange>
          </IndexBottom>
        </IndexCell>
        <TradeCell>买</TradeCell>
        <TradeCell>卖</TradeCell>
        <TradeCell>撤</TradeCell>
        <MoreCell>
          <svg width={54} height={54} viewBox="0 0 54 54">
            <circle cx={27} cy={27} r={25} fill="none" stroke="#333" strokeWidth={3} />
            <circle cx={17} cy={27} r={2.6} fill="#333" />
            <circle cx={27} cy={27} r={2.6} fill="#333" />
            <circle cx={37} cy={27} r={2.6} fill="#333" />
          </svg>
          更多
        </MoreCell>
      </TradeBar>

      <NavBar>
        <svg width={46} height={54} viewBox="0 0 46 54">
          <path d="M43 3 V51 L3 27 Z" fill="none" stroke="#d0d0d0" strokeWidth={5} strokeLinejoin="round" />
        </svg>
        <svg width={54} height={54} viewBox="0 0 54 54">
          <circle cx={27} cy={27} r={24.5} fill="none" stroke="#d0d0d0" strokeWidth={5} />
        </svg>
        <svg width={46} height={48} viewBox="0 0 46 48">
          <rect x={2.5} y={2.5} width={41} height={43} rx={2} fill="none" stroke="#d0d0d0" strokeWidth={5} />
        </svg>
      </NavBar>
    </Page>
  );
}

export default App;
